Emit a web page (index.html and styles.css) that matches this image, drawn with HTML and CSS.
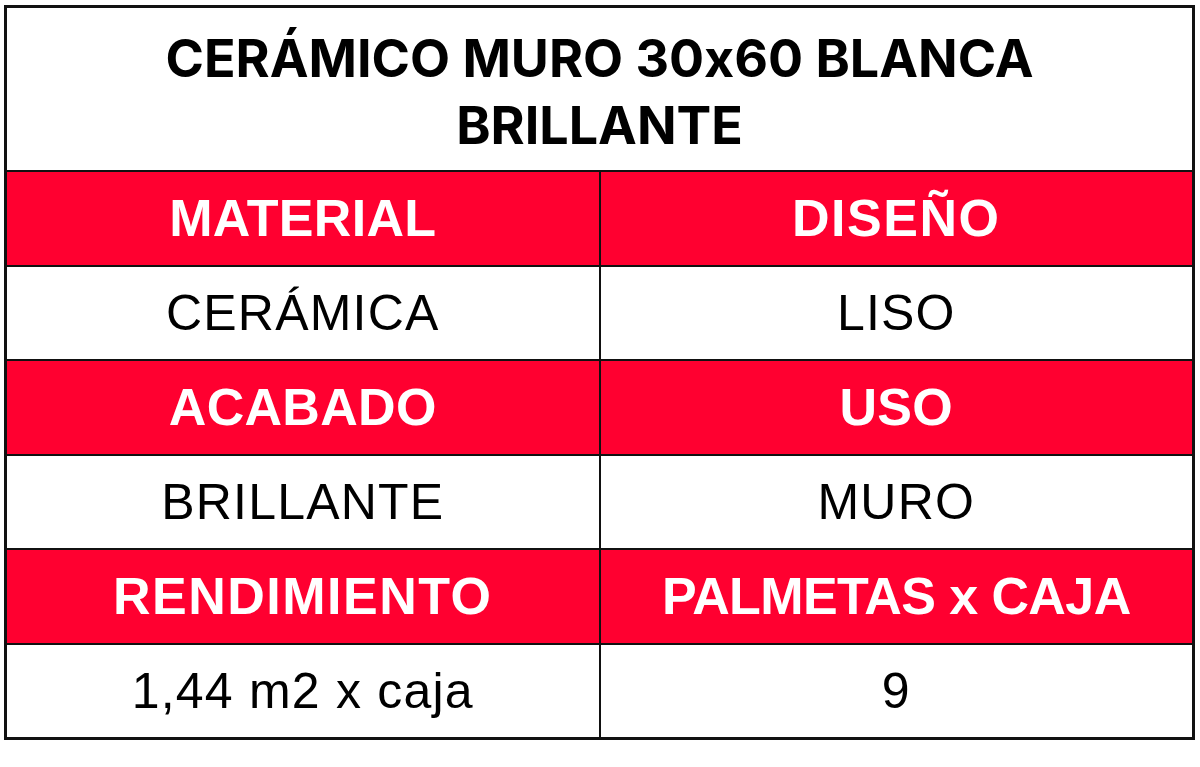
FILE: index.html
```html
<!DOCTYPE html>
<html lang="es">
<head>
<meta charset="utf-8">
<title>Cerámico Muro 30x60 Blanca Brillante</title>
<link rel="stylesheet" href="styles.css">
</head>
<body>
<table class="spec">
  <tr><th colspan="2" class="title">CERÁMICO MURO 30x60 BLANCA<br>BRILLANTE</th></tr>
  <tr class="head"><td>MATERIAL</td><td class="wide">DISEÑO</td></tr>
  <tr class="val"><td>CERÁMICA</td><td>LISO</td></tr>
  <tr class="head"><td>ACABADO</td><td>USO</td></tr>
  <tr class="val"><td>BRILLANTE</td><td>MURO</td></tr>
  <tr class="head"><td class="wide">RENDIMIENTO</td><td class="narrow">PALMETAS x CAJA</td></tr>
  <tr class="val"><td>1,44 m2 x caja</td><td>9</td></tr>
</table>
</body>
</html>
```
FILE: styles.css
```css
html, body {
  margin: 0;
  padding: 0;
  background: #ffffff;
}
body {
  padding: 5px 0 0 4px;
}
.spec {
  width: 1191px;
  border-collapse: collapse;
  table-layout: fixed;
  border: 3px solid #111;
}
.spec td, .spec th {
  border: 2.5px solid #111;
  text-align: center;
  vertical-align: middle;
  padding: 0;
}
.spec .title {
  height: 156px;
  padding: 6px 0 0;
  font-family: Inter, "Liberation Sans", sans-serif;
  font-feature-settings: "calt" 0;
  font-weight: 700;
  font-size: 52px;
  line-height: 67px;
  color: #000;
}
.head td {
  height: 92.5px;
  background: #ff0030;
  color: #fff;
  font-family: "Liberation Sans", Arial, sans-serif;
  font-weight: 700;
  font-size: 52px;
  letter-spacing: 0.3px;
}
.head td.wide {
  letter-spacing: 1.5px;
}
.head td.narrow {
  letter-spacing: -0.6px;
}
.val td {
  height: 92.5px;
  color: #000;
  font-family: "Liberation Sans", Arial, sans-serif;
  font-weight: 400;
  font-size: 50px;
  letter-spacing: 1.2px;
}
```
